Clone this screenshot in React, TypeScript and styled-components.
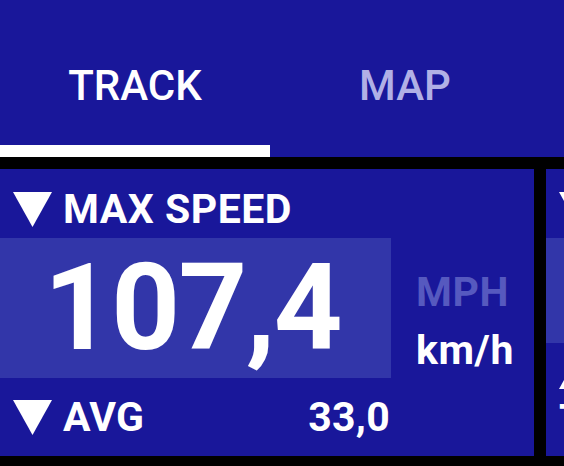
import styled, { createGlobalStyle } from 'styled-components';

const GlobalStyle = createGlobalStyle`
  html, body {
    margin: 0;
    padding: 0;
    background: #000;
    overflow: hidden;
  }
  body {
    font-family: Roboto, "Liberation Sans", sans-serif;
    color: #fff;
  }
`;

const Screen = styled.div`
  width: 564px;
  height: 466px;
  overflow: hidden;
  background: #000;
`;

const TabBar = styled.nav`
  height: 157px;
  background: #19179a;
  display: flex;
`;

const Tab = styled.div<{ $active?: boolean }>`
  flex: 0 0 270px;
  display: flex;
  align-items: center;
  justify-content: center;
  padding-top: 25px;
  box-sizing: border-box;
  font-size: 42px;
  font-weight: 500;
  color: ${(p) => (p.$active ? '#ffffff' : '#b1b0e6')};
  border-bottom: 12px solid ${(p) => (p.$active ? '#ffffff' : 'transparent')};
`;

const Cards = styled.div`
  display: flex;
  gap: 12px;
  padding-top: 12px;
`;

const Card = styled.section<{ $width: number }>`
  flex: 0 0 ${(p) => p.$width}px;
  height: 287px;
  background: #19179a;
  display: flex;
  flex-direction: column;
`;

const Label = styled.div`
  height: 69px;
  padding: 12px 0 0 13px;
  box-sizing: border-box;
  display: flex;
  align-items: center;
  gap: 11px;
  font-size: 41px;
  font-weight: 700;
  letter-spacing: 0.5px;
  line-height: 1;
  white-space: nowrap;
`;

const Main = styled.div`
  display: flex;
  gap: 25px;
`;

const Highlight = styled.div<{ $height: number }>`
  flex: 0 0 391px;
  height: ${(p) => p.$height}px;
  background: #3236a9;
  display: flex;
  align-items: center;
  justify-content: center;
`;

const BigValue = styled.span`
  font-size: 120px;
  font-weight: 700;
  line-height: 1;
  letter-spacing: -1.5px;
  padding-right: 6px;
`;

const Units = styled.div`
  display: flex;
  flex-direction: column;
  gap: 17px;
  padding-top: 34px;
  font-size: 41px;
  font-weight: 700;
  letter-spacing: 0.6px;
  line-height: 1;
`;

const Unit = styled.span<{ $dim?: boolean }>`
  color: ${(p) => (p.$dim ? '#5659bf' : '#ffffff')};
`;

const StatRow = styled.div<{ $height: number }>`
  width: 391px;
  height: ${(p) => p.$height}px;
  padding: 0 1px 0 13px;
  box-sizing: border-box;
  display: flex;
  align-items: center;
  justify-content: space-between;
  font-size: 41px;
  font-weight: 700;
  letter-spacing: 0.3px;
  line-height: 1;
  white-space: nowrap;
`;

const StatName = styled.span`
  display: flex;
  align-items: center;
  gap: 11px;
`;

const Triangle = ({ up }: { up?: boolean }) => (
  <svg width="39" height="35" viewBox="0 0 39 35">
    <polygon points={up ? '19.5,0 39,35 0,35' : '0,0 39,0 19.5,35'} fill="#fff" />
  </svg>
);

export default function App() {
  return (
    <Screen>
      <GlobalStyle />
      <TabBar>
        <Tab $active>TRACK</Tab>
        <Tab>MAP</Tab>
      </TabBar>

      <Cards>
        <Card $width={534}>
          <Label>
            <Triangle />
            MAX SPEED
          </Label>
          <Main>
            <Highlight $height={140}>
              <BigValue>107,4</BigValue>
            </Highlight>
            <Units>
              <Unit $dim>MPH</Unit>
              <Unit>km/h</Unit>
            </Units>
          </Main>
          <StatRow $height={78}>
            <StatName>
              <Triangle />
              AVG
            </StatName>
            <span>33,0</span>
          </StatRow>
        </Card>

        <Card $width={534}>
          <Label>
            <Triangle />
            ALTITUDE
          </Label>
          <Main>
            <Highlight $height={105}>
              <BigValue>0</BigValue>
            </Highlight>
          </Main>
          <StatRow $height={56}>
            <StatName>
              <Triangle up />
              ASC
            </StatName>
          </StatRow>
          <StatRow $height={40}>
            <StatName>TIME</StatName>
          </StatRow>
        </Card>
      </Cards>
    </Screen>
  );
}
